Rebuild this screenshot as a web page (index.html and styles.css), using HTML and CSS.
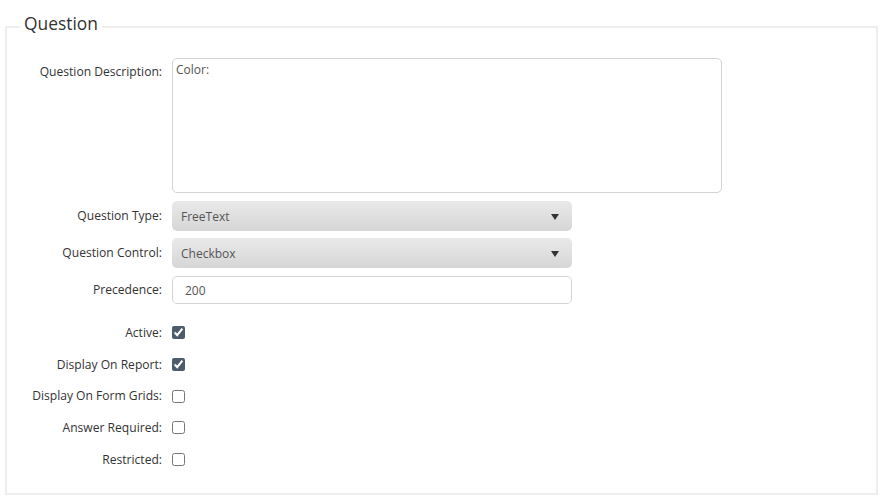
FILE: index.html
```html
<!DOCTYPE html>
<html>
<head>
<meta charset="utf-8">
<link rel="stylesheet" href="styles.css">
</head>
<body>
<div class="page">
  <fieldset class="panel">
    <legend class="panel-title">Question</legend>
    <div class="row row-desc">
      <label class="lbl lbl-top">Question Description:</label>
      <textarea class="area">Color:</textarea>
    </div>
    <div class="row row-select first-select">
      <label class="lbl">Question Type:</label>
      <div class="select"><span class="select-text">FreeText</span><span class="caret"></span></div>
    </div>
    <div class="row row-select second-select">
      <label class="lbl">Question Control:</label>
      <div class="select"><span class="select-text">Checkbox</span><span class="caret"></span></div>
    </div>
    <div class="row row-input">
      <label class="lbl">Precedence:</label>
      <input class="text-input" type="text" value="200">
    </div>
    <div class="checks">
      <div class="row row-check">
        <label class="lbl">Active:</label>
        <input class="chk" type="checkbox" checked>
      </div>
      <div class="row row-check">
        <label class="lbl">Display On Report:</label>
        <input class="chk" type="checkbox" checked>
      </div>
      <div class="row row-check">
        <label class="lbl">Display On Form Grids:</label>
        <input class="chk" type="checkbox">
      </div>
      <div class="row row-check">
        <label class="lbl">Answer Required:</label>
        <input class="chk" type="checkbox">
      </div>
      <div class="row row-check">
        <label class="lbl">Restricted:</label>
        <input class="chk" type="checkbox">
      </div>
    </div>
  </fieldset>
</div>
</body>
</html>
```

FILE: styles.css
```css
html, body {
  margin: 0;
  padding: 0;
  background: #fff;
}
body {
  font-family: "Open Sans", "Noto Sans", "Liberation Sans", sans-serif;
  font-size: 12px;
  color: #333;
}
.page {
  padding: 11px 6px 0 5px;
}
.panel {
  box-sizing: border-box;
  width: 873px;
  margin: 0;
  padding: 0 0 18px 0;
  border: 2px solid #eeeeee;
  min-width: 0;
}
.panel-title {
  margin-left: 13px;
  padding: 0 4px 8px 4px;
  font-size: 17.4px;
  line-height: 24px;
  color: #333;
  font-weight: 400;
}
.row {
  display: flex;
  align-items: center;
}
.lbl {
  width: 155px;
  flex: none;
  text-align: right;
  margin-right: 10px;
  line-height: 16px;
  color: #333;
  font-size: 12.1px;
}
.row-desc {
  align-items: flex-start;
  margin-top: 15px;
}
.lbl-top {
  padding-top: 6px;
}
.area {
  box-sizing: border-box;
  width: 550px;
  height: 135px;
  margin: 0;
  padding: 3px 3px;
  border: 1px solid #d4d4d4;
  border-radius: 5px;
  font-family: inherit;
  font-size: 12px;
  line-height: 16px;
  color: #555;
  resize: none;
  outline: none;
}
.first-select {
  margin-top: 8px;
}
.second-select {
  margin-top: 7px;
}
.select {
  box-sizing: border-box;
  width: 400px;
  height: 30px;
  display: flex;
  align-items: center;
  padding: 0 13px 0 9px;
  border-radius: 5px;
  background: linear-gradient(to bottom, #e9e9e9, #d6d6d6);
  color: #555;
}
.select-text {
  flex: 1;
}
.caret {
  width: 0;
  height: 0;
  border-left: 4px solid transparent;
  border-right: 4px solid transparent;
  border-top: 6px solid #333;
  margin-top: 1px;
}
.row-input {
  margin-top: 8px;
}
.text-input {
  box-sizing: border-box;
  width: 400px;
  height: 28px;
  margin: 0;
  padding: 0 12px;
  border: 1px solid #d4d4d4;
  border-radius: 5px;
  font-family: inherit;
  font-size: 12px;
  color: #555;
  outline: none;
}
.checks {
  margin-top: 13px;
}
.row-check {
  height: 31.7px;
}
.chk {
  width: 13px;
  height: 13px;
  margin: 0;
  accent-color: #4c5c6b;
}
```
